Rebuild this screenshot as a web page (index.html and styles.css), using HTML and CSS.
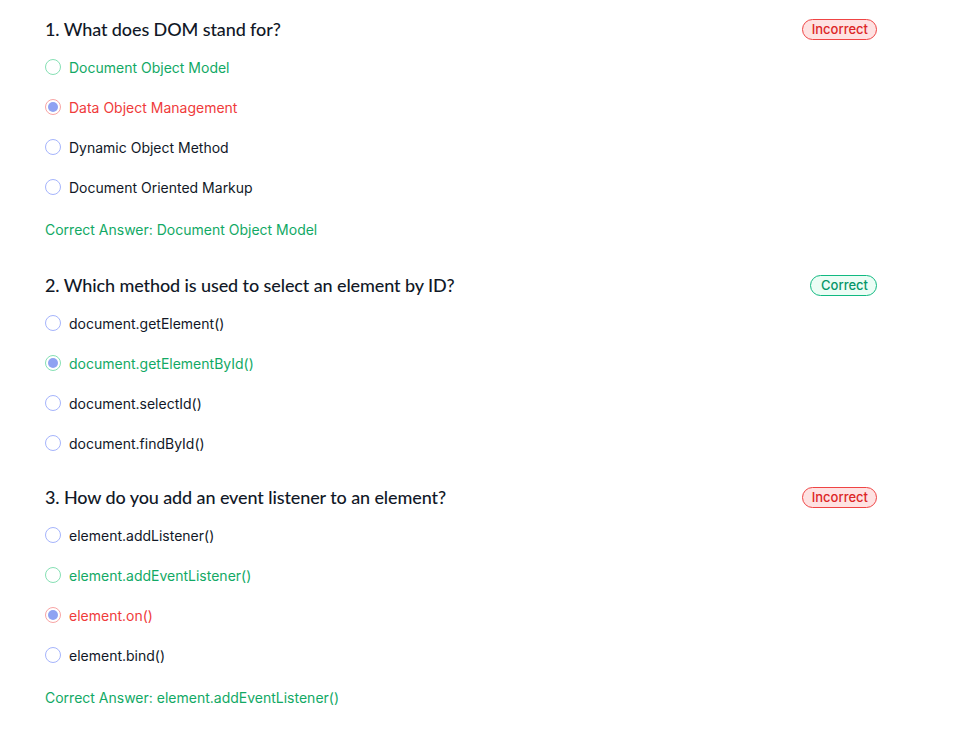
FILE: index.html
```html
<!DOCTYPE html>
<html lang="en">
<head>
<meta charset="utf-8">
<title>Quiz Results</title>
<link rel="stylesheet" href="styles.css">
</head>
<body>
<main class="quiz">
  <section class="question">
    <div class="q-head">
      <h2 class="q-title">1. What does DOM stand for?</h2>
      <span class="badge badge-wrong">Incorrect</span>
    </div>
    <ul class="options">
      <li class="option is-correct"><span class="radio"></span><span>Document Object Model</span></li>
      <li class="option is-wrong"><span class="radio checked"></span><span>Data Object Management</span></li>
      <li class="option"><span class="radio"></span><span>Dynamic Object Method</span></li>
      <li class="option"><span class="radio"></span><span>Document Oriented Markup</span></li>
    </ul>
    <p class="answer">Correct Answer: Document Object Model</p>
  </section>

  <section class="question">
    <div class="q-head">
      <h2 class="q-title">2. Which method is used to select an element by ID?</h2>
      <span class="badge badge-right">Correct</span>
    </div>
    <ul class="options">
      <li class="option"><span class="radio"></span><span>document.getElement()</span></li>
      <li class="option is-correct"><span class="radio checked"></span><span>document.getElementById()</span></li>
      <li class="option"><span class="radio"></span><span>document.selectId()</span></li>
      <li class="option"><span class="radio"></span><span>document.findById()</span></li>
    </ul>
  </section>

  <section class="question">
    <div class="q-head">
      <h2 class="q-title">3. How do you add an event listener to an element?</h2>
      <span class="badge badge-wrong">Incorrect</span>
    </div>
    <ul class="options">
      <li class="option"><span class="radio"></span><span>element.addListener()</span></li>
      <li class="option is-correct"><span class="radio"></span><span>element.addEventListener()</span></li>
      <li class="option is-wrong"><span class="radio checked"></span><span>element.on()</span></li>
      <li class="option"><span class="radio"></span><span>element.bind()</span></li>
    </ul>
    <p class="answer">Correct Answer: element.addEventListener()</p>
  </section>
</main>
</body>
</html>
```

FILE: styles.css
```css
* { box-sizing: border-box; }

html, body {
  margin: 0;
  padding: 0;
  background: #ffffff;
}

body {
  font-family: Inter, "Noto Sans", sans-serif;
  color: #111827;
}

.quiz {
  width: 877px;
  padding: 15px 0 0 45px;
}

.question {
  margin-bottom: 28px;
}

.q-head {
  display: flex;
  align-items: center;
  justify-content: space-between;
  height: 28px;
  margin-bottom: 12px;
}

.q-title {
  margin: 0;
  font-family: Lato, "Noto Sans", sans-serif;
  font-size: 18px;
  font-weight: 500;
  line-height: 28px;
  letter-spacing: -0.1px;
  color: #111827;
}

.badge {
  display: inline-flex;
  align-items: center;
  height: 21px;
  padding: 0 9px 0 10px;
  border-radius: 999px;
  font-size: 13px;
  font-weight: 500;
  line-height: 1;
}

.badge-wrong {
  border: 1px solid #ef4444;
  background: #fee2e2;
  color: #dc2626;
  padding: 0 8px 0 9px;
}

.badge-right {
  border: 1px solid #10b981;
  background: #ecfdf5;
  color: #059669;
  padding: 0 8px 0 10px;
}

.options {
  list-style: none;
  margin: 0;
  padding: 0;
  display: flex;
  flex-direction: column;
  gap: 16px;
}

.option {
  display: flex;
  align-items: center;
  gap: 8px;
  height: 24px;
  padding-top: 1px;
  font-size: 14px;
  color: #111827;
}

.radio {
  width: 16px;
  height: 16px;
  margin-top: -1px;
  border-radius: 50%;
  border: 1px solid #a5b4fc;
  background: #fff;
  display: inline-flex;
  align-items: center;
  justify-content: center;
  flex: none;
}

.radio.checked::after {
  content: "";
  width: 10px;
  height: 10px;
  border-radius: 50%;
  background: #8fa2f2;
}

.option.is-correct { color: #12a965; }
.option.is-correct .radio { border-color: #86e0b4; }

.option.is-wrong { color: #ef3b3b; }
.option.is-wrong .radio { border-color: #f8a4a4; }

.answer {
  margin: 18px 0 0;
  font-size: 14px;
  line-height: 26px;
  color: #12a965;
}
```
